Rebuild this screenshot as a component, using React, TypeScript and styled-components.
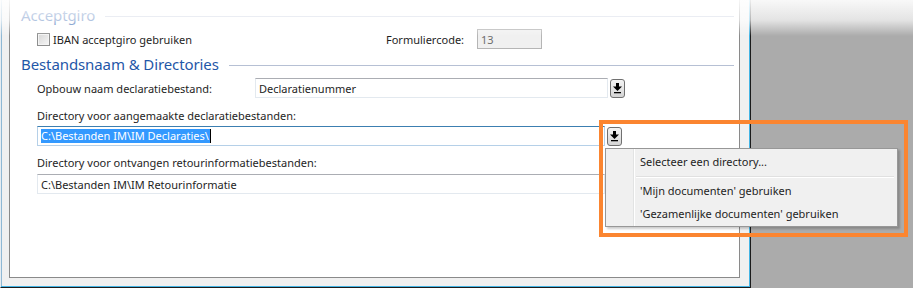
import React from 'react'
import styled, { createGlobalStyle } from 'styled-components'

const GlobalStyle = createGlobalStyle`
	html, body {
		margin: 0;
		padding: 0;
	}
	body {
		width: 913px;
		height: 288px;
		overflow: hidden;
		background: #ababab;
		font-family: 'Noto Sans', 'Open Sans', sans-serif;
		font-size: 11px;
		color: #1e1e1e;
	}
`

const DropIcon = () => (
	<svg width="9" height="11" viewBox="0 0 9 11">
		<rect x="3" y="0" width="3" height="4" fill="#000" />
		<path d="M0 3.5 H9 L4.5 8 Z" fill="#000" />
		<rect x="1" y="9" width="7" height="1.3" fill="#000" />
	</svg>
)

const DropButton = () => (
	<DropBtn type="button">
		<DropIcon />
	</DropBtn>
)

export default function App(): JSX.Element {
	return (
		<Screen>
			<GlobalStyle />
			<Window>
				<Panel>
					<GroupHeader>
						<span>Acceptgiro</span>
						<Rule />
					</GroupHeader>
					<CheckRow>
						<CheckLabel>
							<CheckBox />
							IBAN acceptgiro gebruiken
						</CheckLabel>
						<FieldLabel $width={91}>Formuliercode:</FieldLabel>
						<SmallInput>13</SmallInput>
					</CheckRow>
					<GroupHeader>
						<span>Bestandsnaam &amp; Directories</span>
						<Rule />
					</GroupHeader>
					<Indent>
						<FieldRow>
							<FieldLabel $width={216}>Opbouw naam declaratiebestand:</FieldLabel>
							<TextBox $width={353}>Declaratienummer</TextBox>
							<DropButton />
						</FieldRow>
						<StackLabel $top={9}>Directory voor aangemaakte declaratiebestanden:</StackLabel>
						<FieldRow $top={1}>
							<TextBox $width={568} $focused>
								<Selection>C:\Bestanden IM\IM Declaraties\</Selection>
								<Caret />
							</TextBox>
							<DropButton />
						</FieldRow>
						<StackLabel $top={8}>Directory voor ontvangen retourinformatiebestanden:</StackLabel>
						<FieldRow $top={2}>
							<TextBox $width={568}>C:\Bestanden IM\IM Retourinformatie</TextBox>
							<DropButton />
						</FieldRow>
					</Indent>
				</Panel>
			</Window>
			<TopFade />
			<Menu>
				<MenuItem>Selecteer een directory...</MenuItem>
				<MenuSeparator />
				<MenuItem>'Mijn documenten' gebruiken</MenuItem>
				<MenuItem>'Gezamenlijke documenten' gebruiken</MenuItem>
			</Menu>
			<Highlight />
		</Screen>
	)
}

const Screen = styled.div`
	position: relative;
	width: 913px;
	height: 288px;
	overflow: hidden;
`

const Window = styled.div`
	box-sizing: border-box;
	width: 751px;
	height: 288px;
	background: #f0f0f0;
	border-left: 1px solid #e6ecf1;
	border-right: 1px solid #1b1b1b;
	border-bottom: 1px solid #1b1b1b;
	box-shadow: inset -1px -1px 0 #44b4e4, inset 1px 0 0 #8fb8d4;
	padding: 0 10px 9px 8px;
`

const Panel = styled.div`
	box-sizing: border-box;
	width: 731px;
	height: 278px;
	background: #fff;
	border: 1px solid #8a8a8a;
	border-top: none;
	padding: 5px 5px 0 11px;
`

const GroupHeader = styled.div`
	display: flex;
	align-items: center;
	gap: 10px;
	height: 20px;
	margin-top: 4px;
	font-size: 15px;
	letter-spacing: -0.1px;
	color: #1f57a8;
	white-space: nowrap;

	&:first-child {
		margin-top: 0;
	}
`

const Rule = styled.div`
	flex: 1;
	height: 1px;
	margin-top: 2px;
	background: #b6c0d4;
`

const CheckRow = styled.div`
	display: flex;
	align-items: center;
	height: 22px;
	margin-top: 3px;
	padding-left: 16px;
`

const CheckLabel = styled.label`
	display: flex;
	align-items: center;
	gap: 3px;
	width: 349px;
	white-space: nowrap;
`

const CheckBox = styled.span`
	box-sizing: border-box;
	width: 13px;
	height: 13px;
	border: 1px solid #8e8f8f;
	background: linear-gradient(135deg, #d6d6d6, #f7f7f7);
	box-shadow: inset 0 0 0 1px #f4f4f4;
`

const FieldLabel = styled.span<{ $width: number }>`
	width: ${(p) => p.$width}px;
	flex-shrink: 0;
	white-space: nowrap;
`

const SmallInput = styled.div`
	box-sizing: border-box;
	width: 65px;
	height: 20px;
	padding-left: 3px;
	display: flex;
	align-items: center;
	background: #f0f0f0;
	border: 1px solid #b5b5b5;
	color: #6d6d6d;
`

const Indent = styled.div`
	padding-left: 16px;
`

const FieldRow = styled.div<{ $top?: number }>`
	display: flex;
	align-items: center;
	gap: 2px;
	height: 20px;
	margin-top: ${(p) => p.$top ?? 4}px;
`

const StackLabel = styled.div<{ $top: number }>`
	height: 18px;
	line-height: 18px;
	margin-top: ${(p) => p.$top}px;
	white-space: nowrap;
`

const TextBox = styled.div<{ $width: number; $focused?: boolean }>`
	box-sizing: border-box;
	width: ${(p) => p.$width}px;
	height: 20px;
	padding-left: 3px;
	display: flex;
	align-items: center;
	background: #fff;
	border: 1px solid ${(p) => (p.$focused ? '#b5d0e8' : '#e3e9ef')};
	border-top-color: ${(p) => (p.$focused ? '#3c7fb1' : '#abadb3')};
	white-space: nowrap;
`

const Selection = styled.span`
	background: #3399ff;
	color: #fff;
	line-height: 14px;
	padding-right: 1px;
`

const Caret = styled.span`
	width: 1px;
	height: 14px;
	background: #000;
`

const DropBtn = styled.button`
	box-sizing: border-box;
	width: 15px;
	height: 19px;
	padding: 0;
	display: flex;
	align-items: center;
	justify-content: center;
	border: 1px solid #707070;
	border-radius: 3px;
	background: linear-gradient(#f4f4f4, #e6e6e6 50%, #d4d4d4);
`

const TopFade = styled.div`
	position: absolute;
	left: 0;
	top: 0;
	width: 100%;
	height: 38px;
	pointer-events: none;
	background: linear-gradient(
		rgba(255, 255, 255, 0.92) 0px,
		rgba(255, 255, 255, 0.68) 20px,
		rgba(255, 255, 255, 0) 36px
	);
`

const Menu = styled.div`
	position: absolute;
	left: 605px;
	top: 148px;
	box-sizing: border-box;
	width: 293px;
	height: 79px;
	padding: 1px 0;
	border: 1px solid #979797;
	box-shadow: 2px 2px 2px rgba(0, 0, 0, 0.2);
	background: linear-gradient(
		to right,
		#f0f0f0 0 27px,
		#e2e3e3 27px 28px,
		#ffffff 28px 29px,
		#f0f0f0 29px
	);
`

const MenuItem = styled.div`
	height: 23px;
	line-height: 23px;
	padding-left: 34px;
	white-space: nowrap;
`

const MenuSeparator = styled.div`
	height: 6px;
	margin: 0 3px 0 30px;
	background: linear-gradient(
		transparent 0 3px,
		#e0e0e0 3px 4px,
		#ffffff 4px 5px,
		transparent 5px
	);
`

const Highlight = styled.div`
	position: absolute;
	left: 599px;
	top: 120px;
	box-sizing: border-box;
	width: 309px;
	height: 117px;
	border: 4px solid #fb8530;
	pointer-events: none;
`
